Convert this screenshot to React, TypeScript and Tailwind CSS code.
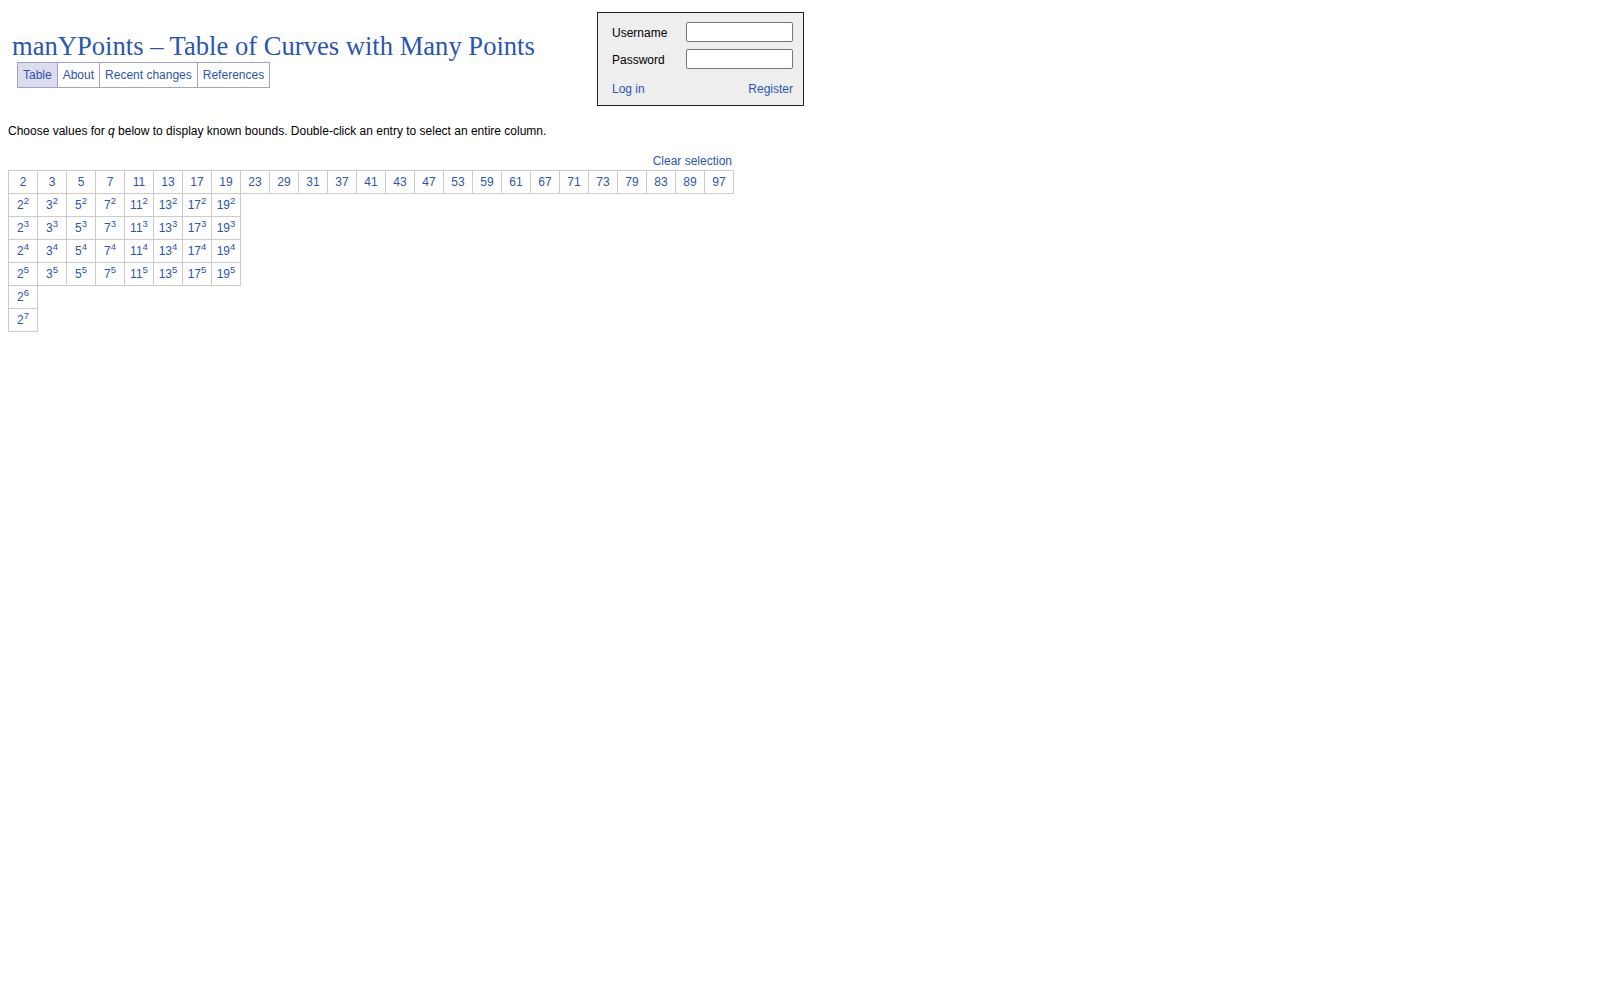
import React from "react";

const primes = [2, 3, 5, 7, 11, 13, 17, 19, 23, 29, 31, 37, 41, 43, 47, 53, 59, 61, 67, 71, 73, 79, 83, 89, 97];
const small = [2, 3, 5, 7, 11, 13, 17, 19];

// rows of prime powers below the header row
const powerRows: { base: number; exp: number }[][] = [2, 3, 4, 5].map((exp) =>
  small.map((base) => ({ base, exp }))
);
powerRows.push([{ base: 2, exp: 6 }]);
powerRows.push([{ base: 2, exp: 7 }]);

const tabs = ["Table", "About", "Recent changes", "References"];

const App = () => {
  return (
    <div className="min-h-screen w-full bg-white px-[8px] pt-[12px] text-[12px] text-black" style={{ fontFamily: '"Liberation Sans", Arial, sans-serif' }}>
      <div className="flex">
        <div className="w-[589px]">
          <h1
            className="mt-[21px] pl-[4px] text-[26.6px] leading-[27px] text-[#2a55b0]"
            style={{ fontFamily: '"Liberation Serif", "Times New Roman", serif' }}
          >
            manYPoints – Table of Curves with Many Points
          </h1>
          <div className="ml-[9px] mt-[2px] flex w-fit border border-[#a0a0dd]">
            {tabs.map((t, i) => (
              <a
                key={t}
                className={
                  "flex h-[24px] items-center px-[5px] text-[#2a55b0] " +
                  (i > 0 ? "border-l border-[#a0a0dd] " : "") +
                  (i === 0 ? "bg-[#dcdcec]" : "")
                }
              >
                {t}
              </a>
            ))}
          </div>
        </div>
        <div className="h-[94px] w-[207px] border border-[#222] bg-[#eeeeee] pl-[14px] pr-[10px] pt-[9px]">
          <div className="flex h-[20px] items-center justify-between">
            <span className="pt-[2px]">Username</span>
            <input className="h-[20px] w-[107px] rounded-[2px] border border-[#767676] bg-white" />
          </div>
          <div className="mt-[7px] flex h-[20px] items-center justify-between">
            <span className="pt-[2px]">Password</span>
            <input type="password" className="h-[20px] w-[107px] rounded-[2px] border border-[#767676] bg-white" />
          </div>
          <div className="mt-[13px] flex justify-between leading-[14px] text-[#2a55b0]">
            <a>Log in</a>
            <a>Register</a>
          </div>
        </div>
      </div>

      <p className="mt-[18px] leading-[14px]">
        Choose values for <i>q</i> below to display known bounds. Double-click an entry to select an entire column.
      </p>

      <div className="mt-[16px] w-[726px]">
        <div className="pr-[2px] text-right leading-[14px] text-[#2a55b0]">
          <a>Clear selection</a>
        </div>
        <table className="mt-[2px] border-collapse">
          <tbody>
            <tr>
              {primes.map((p) => (
                <td key={p} className="h-[23px] w-[29px] border border-[#cccccc] p-0 text-center text-[#2a55b0]">
                  {p}
                </td>
              ))}
            </tr>
            {powerRows.map((row, ri) => (
              <tr key={ri}>
                {row.map((c) => (
                  <td key={c.base} className="h-[23px] w-[29px] border border-[#cccccc] p-0 text-center text-[#2a55b0]">
                    {c.base}
                    <sup className="text-[9.5px]">{c.exp}</sup>
                  </td>
                ))}
              </tr>
            ))}
          </tbody>
        </table>
      </div>
    </div>
  );
};

export default App;
